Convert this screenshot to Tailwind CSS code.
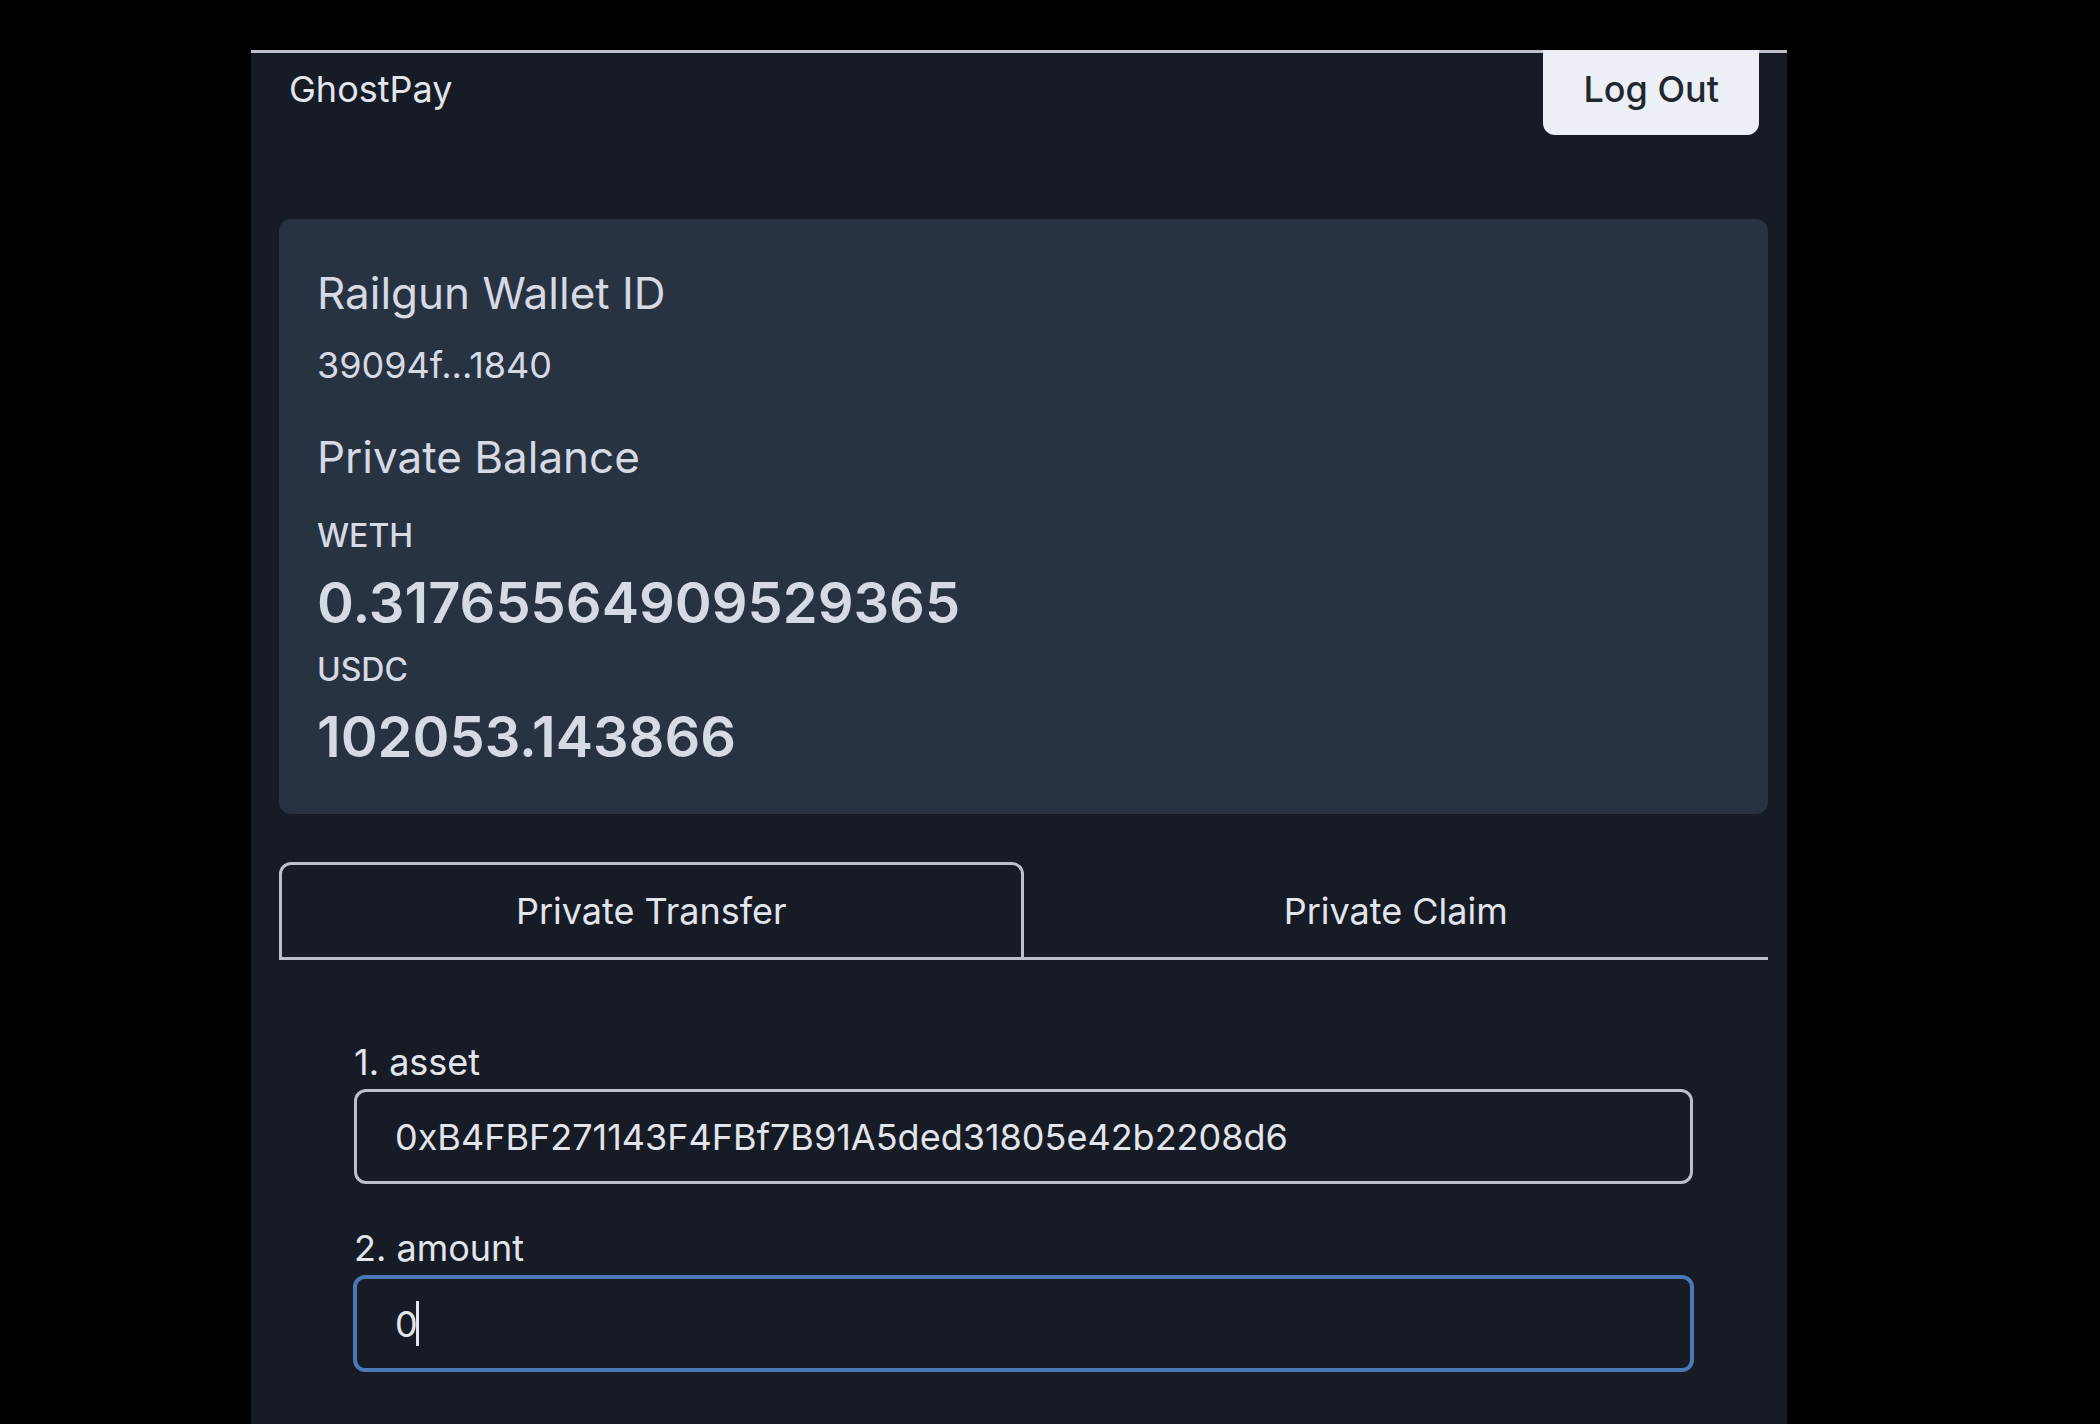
<!DOCTYPE html>
<html lang="en">
<head>
<meta charset="utf-8">
<meta name="viewport" content="width=device-width, initial-scale=1">
<title>GhostPay</title>
<script src="https://cdn.jsdelivr.net/npm/@tailwindcss/browser@4"></script>
</head>
<body class="flex min-h-screen bg-black pt-[50px] pr-[313px] pl-[251px] font-['Inter',sans-serif] text-[36px] leading-[54px] text-[#e2e5ec]">
<div class="flex grow flex-col border-t-3 border-[#bcc0c9] bg-[#171b26]">
  <header class="flex items-start justify-between pr-7 pl-[38px]">
    <h1 class="pt-[9px]">GhostPay</h1>
    <button type="button" class="-mt-[3px] h-[85px] rounded-b-xl bg-[#eceff5] px-10 pb-2 font-medium text-[#22272f]">Log Out</button>
  </header>

  <main class="flex flex-col pt-[84px] pr-[19px] pl-7">
    <section class="flex flex-col rounded-xl bg-[#283341] px-[38px] pt-[44px] pb-[35px] text-[#d5dae4]">
      <h2 class="text-[44px] leading-[60px]">Railgun Wallet ID</h2>
      <p class="mt-[15px]">39094f...1840</p>
      <h2 class="mt-[35px] text-[44px] leading-[60px]">Private Balance</h2>
      <dl class="mt-6">
        <dt class="text-[32px] leading-[50px] font-medium">WETH</dt>
        <dd class="text-[56px] leading-[84px] font-semibold">0.31765564909529365</dd>
        <dt class="text-[32px] leading-[50px] font-medium">USDC</dt>
        <dd class="text-[56px] leading-[84px] font-semibold">102053.143866</dd>
      </dl>
    </section>

    <div role="tablist" class="mt-12 grid h-[98px] grid-cols-2">
      <button type="button" role="tab" aria-selected="true" class="rounded-t-xl border-3 border-[#bcc0c9]">Private Transfer</button>
      <button type="button" role="tab" aria-selected="false" class="border-t-3 border-b-3 border-t-transparent border-b-[#bcc0c9]">Private Claim</button>
    </div>

    <form class="flex flex-col px-[75px] pt-[75px]">
      <label for="asset">1. asset</label>
      <input id="asset" type="text" value="0xB4FBF271143F4FBf7B91A5ded31805e42b2208d6" class="h-[95px] rounded-xl border-3 border-[#bcc0c9] bg-transparent px-[38px] outline-none">
      <label for="amount" class="mt-[37px]">2. amount</label>
      <div class="relative -mx-px flex">
        <input id="amount" type="text" value="0" class="h-[97px] grow rounded-xl border-4 border-[#4a78b4] bg-transparent px-[38px] caret-transparent outline-none">
        <span class="absolute top-[26px] left-[63px] h-[45px] w-[3px] bg-[#e2e5ec]"></span>
      </div>
    </form>
  </main>
</div>
</body>
</html>
